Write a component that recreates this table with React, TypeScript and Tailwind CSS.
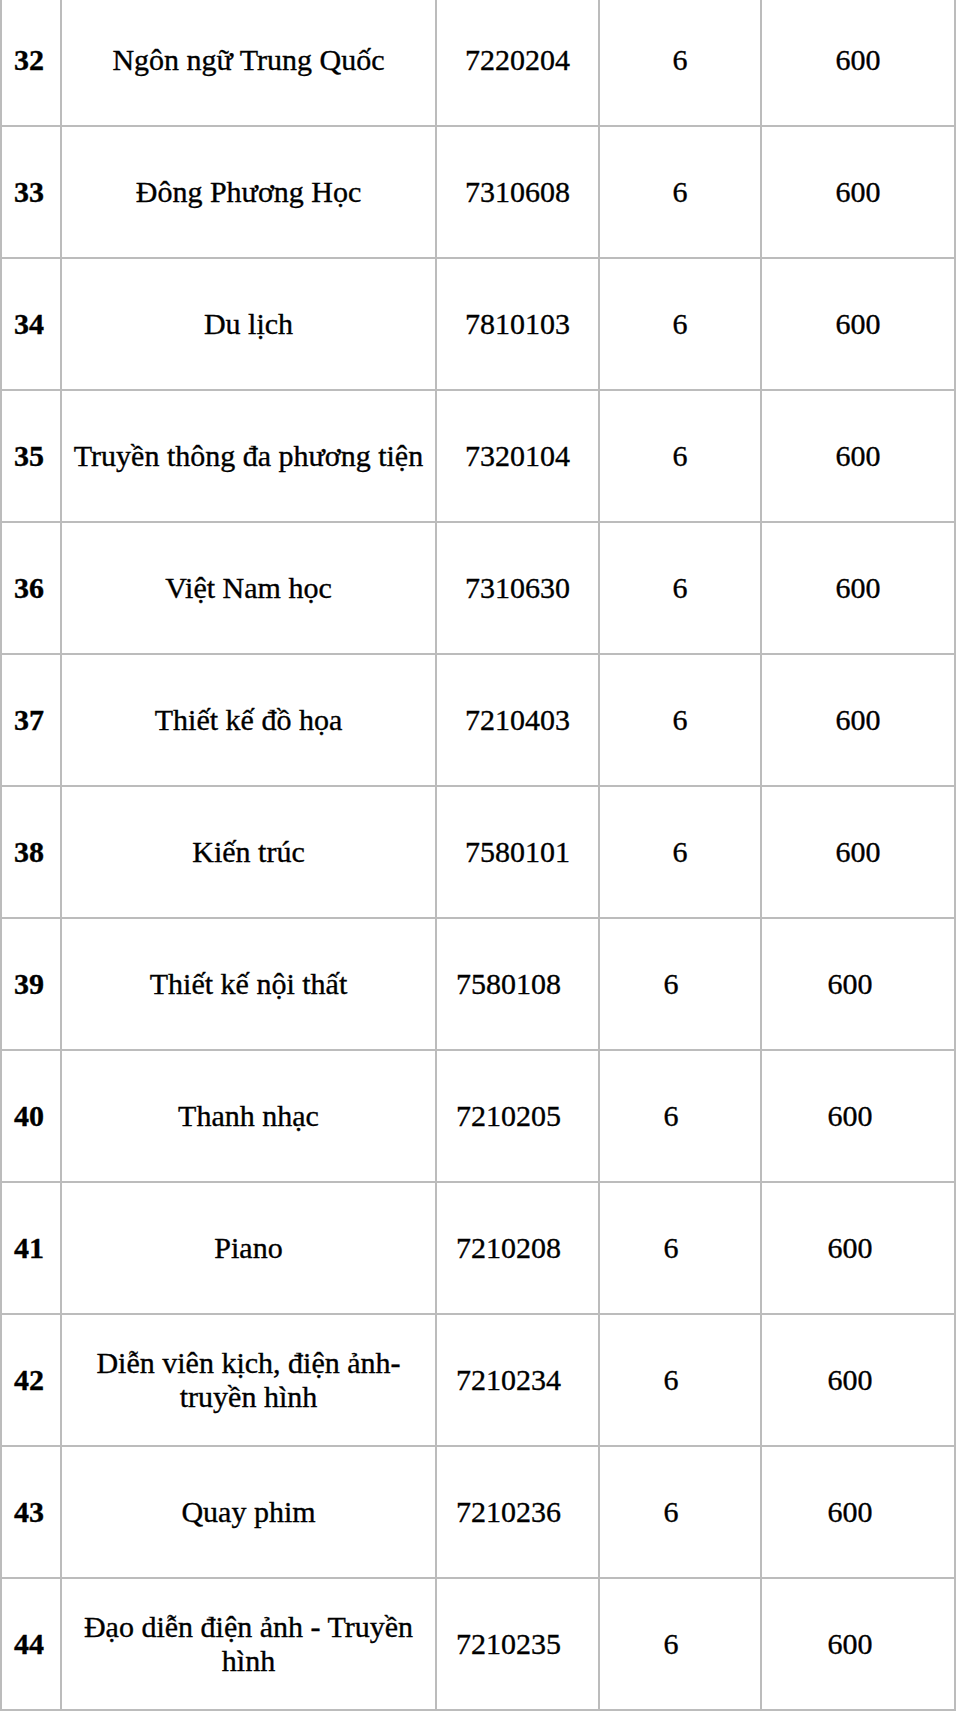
import React from "react";

type Row = { no: string; name: React.ReactNode; code: string; shift: boolean };

const rows: Row[] = [
  { no: "32", name: "Ngôn ngữ Trung Quốc", code: "7220204", shift: false },
  { no: "33", name: "Đông Phương Học", code: "7310608", shift: false },
  { no: "34", name: "Du lịch", code: "7810103", shift: false },
  { no: "35", name: "Truyền thông đa phương tiện", code: "7320104", shift: false },
  { no: "36", name: "Việt Nam học", code: "7310630", shift: false },
  { no: "37", name: "Thiết kế đồ họa", code: "7210403", shift: false },
  { no: "38", name: "Kiến trúc", code: "7580101", shift: false },
  { no: "39", name: "Thiết kế nội thất", code: "7580108", shift: true },
  { no: "40", name: "Thanh nhạc", code: "7210205", shift: true },
  { no: "41", name: "Piano", code: "7210208", shift: true },
  {
    no: "42",
    name: (
      <>
        Diễn viên kịch, điện ảnh-
        <br />
        truyền hình
      </>
    ),
    code: "7210234",
    shift: true,
  },
  { no: "43", name: "Quay phim", code: "7210236", shift: true },
  {
    no: "44",
    name: (
      <>
        Đạo diễn điện ảnh - Truyền
        <br />
        hình
      </>
    ),
    code: "7210235",
    shift: true,
  },
];

export default function App() {
  return (
    <div className="w-[960px] h-[1712px] overflow-hidden bg-white text-black font-['Liberation_Serif','Times_New_Roman',serif]">
      <div className="-mt-[5px] w-[956px] border-l-2 border-[#bcbcbc] text-[30px] leading-[34px] [-webkit-text-stroke:0.35px_#000]">
        {rows.map((r) => (
          <div
            key={r.no}
            className="grid grid-cols-[60px_375px_163px_162px_194px] h-[132px] border-b-2 border-[#bcbcbc]"
          >
            <div className="flex items-center justify-center border-r-2 border-[#bcbcbc] pr-[4px] font-bold">
              {r.no}
            </div>
            <div className="flex items-center justify-center border-r-2 border-[#bcbcbc] text-center whitespace-nowrap">
              <span>{r.name}</span>
            </div>
            <div
              className={
                r.shift
                  ? "flex items-center justify-center border-r-2 border-[#bcbcbc] pr-[18px]"
                  : "flex items-center justify-center border-r-2 border-[#bcbcbc]"
              }
            >
              {r.code}
            </div>
            <div
              className={
                r.shift
                  ? "flex items-center justify-center border-r-2 border-[#bcbcbc] pr-[18px]"
                  : "flex items-center justify-center border-r-2 border-[#bcbcbc]"
              }
            >
              6
            </div>
            <div
              className={
                r.shift
                  ? "flex items-center justify-center border-r-2 border-[#bcbcbc] pr-[16px]"
                  : "flex items-center justify-center border-r-2 border-[#bcbcbc]"
              }
            >
              600
            </div>
          </div>
        ))}
      </div>
    </div>
  );
}
